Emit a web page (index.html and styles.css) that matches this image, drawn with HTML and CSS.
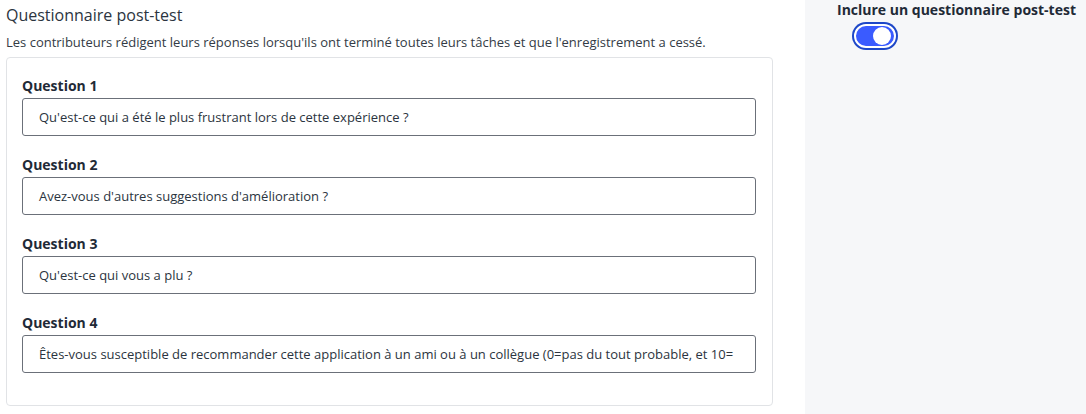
FILE: index.html
```html
<!DOCTYPE html>
<html>
<head>
    <title>Questionnaire post-test</title>
    <link rel="stylesheet" href="styles.css">
</head>
<body>
    <div class="page">
        <div class="main">
            <h2>Questionnaire post-test</h2>
            <p class="intro">Les contributeurs rédigent leurs réponses lorsqu'ils ont terminé toutes leurs tâches et que l'enregistrement a cessé.</p>
            <div class="card">
                <div class="question">
                    <label>Question 1</label>
                    <div class="field">Qu'est-ce qui a été le plus frustrant lors de cette expérience ?</div>
                </div>
                <div class="question">
                    <label>Question 2</label>
                    <div class="field">Avez-vous d'autres suggestions d'amélioration ?</div>
                </div>
                <div class="question">
                    <label>Question 3</label>
                    <div class="field">Qu'est-ce qui vous a plu ?</div>
                </div>
                <div class="question">
                    <label>Question 4</label>
                    <div class="field">Êtes-vous susceptible de recommander cette application à un ami ou à un collègue (0=pas du tout probable, et 10=</div>
                </div>
            </div>
        </div>
        <div class="side">
            <div class="side-title">Inclure un questionnaire post-test</div>
            <div class="toggle">
                <div class="knob"></div>
            </div>
        </div>
    </div>
</body>
</html>
```

FILE: styles.css
```css
body { font-family: "Open Sans", Lato, sans-serif; margin: 0; background: #fff; color: #2b3440; }
.page { display: flex; height: 414px; }
.main { width: 805px; padding: 4px 0 0 6px; box-sizing: border-box; }
h2 { font-size: 16px; font-weight: 400; margin: 0; line-height: 22px; color: #2b3440; }
.intro { font-size: 13px; margin: 7px 0 0; line-height: 18px; color: #333b45; }
.card {
    width: 767px;
    box-sizing: border-box;
    margin-top: 6px;
    border: 1px solid #e1e3e6;
    border-radius: 4px;
    padding: 18px 16px 32px 15px;
}
.question { margin-bottom: 19px; }
.question:last-child { margin-bottom: 0; }
.question label { display: block; font-size: 14px; font-weight: 700; line-height: 20px; margin-bottom: 2px; color: #1f2a37; }
.field {
    height: 38px;
    box-sizing: border-box;
    border: 1px solid #6b7079;
    border-radius: 3px;
    padding: 0 16px;
    font-size: 13px;
    line-height: 36px;
    color: #2b3440;
    white-space: nowrap;
    overflow: hidden;
}
.side { flex: 1; background: #f6f7f9; display: flex; flex-direction: column; align-items: flex-start; padding: 1px 0 0 32px; }
.side-title { font-size: 14px; font-weight: 700; color: #1f2a37; line-height: 18px; }
.toggle {
    margin: 5px 0 0 17px;
    width: 42px;
    height: 24px;
    border-radius: 14px;
    background: #3a5bff;
    border: 2px solid #fff;
    box-shadow: 0 0 0 2px #1d47c8;
    display: flex;
    align-items: center;
    justify-content: flex-end;
    padding: 0 3px;
    box-sizing: border-box;
}
.knob { width: 18px; height: 18px; border-radius: 50%; background: #fff; }
```
